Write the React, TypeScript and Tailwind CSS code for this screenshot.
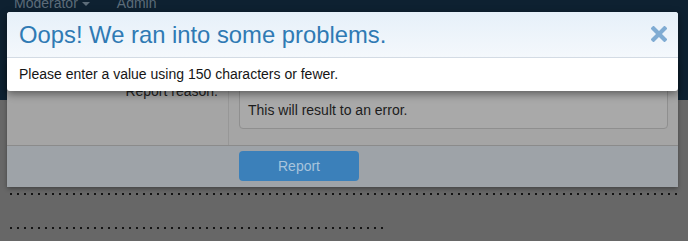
export default function App() {
  return (
    <div className="relative h-[241px] w-[688px] overflow-hidden bg-[#676767] font-['Liberation_Sans',Arial,sans-serif]">
      {/* dimmed page header */}
      <div className="flex h-[100px] flex-col bg-[#0e2131]">
        <div className="-mt-[7px] flex items-center gap-[27px] pl-[14px] text-[14px] text-[#5c6c79]">
          <span className="flex items-center gap-[4px]">
            Moderator
            <span className="h-0 w-0 border-x-[4px] border-t-[4px] border-x-transparent border-t-[#5c6c79]" />
          </span>
          <span>Admin</span>
        </div>
      </div>

      {/* dimmed page content */}
      <div className="flex flex-col gap-[32px] pl-[10px] pt-[93px]">
        <div className="h-[2px] w-[668px] bg-[repeating-linear-gradient(90deg,#141414_0_2px,transparent_2px_7px)]" />
        <div className="h-[2px] w-[374px] bg-[repeating-linear-gradient(90deg,#141414_0_2px,transparent_2px_7px)]" />
      </div>

      {/* report overlay behind */}
      <div className="absolute left-[7px] top-[62px] w-[671px] rounded-b-[3px] bg-[#a5a5a5] shadow-[0_2px_4px_rgba(0,0,0,0.35)]">
        <div className="flex">
          <div className="w-[222px] border-r border-[#979797] pr-[10px] pt-[21px] text-right text-[14px] leading-[16px] text-[#222]">
            Report reason:
          </div>
          <div className="flex-1 pb-[16px] pl-[10px] pr-[10px] pt-[8px]">
            <div className="flex h-[59px] items-end rounded-[4px] border border-[#8f8f8f] bg-[#a9a9a9] pb-[9px] pl-[8px] text-[14px] leading-[18px] text-[#1c1c1c]">
              This will result to an error.
            </div>
          </div>
        </div>
        <div className="border-t border-[#8b8b8b] bg-[#9ea3a8] pb-[6px] pl-[232px] pt-[5px]">
          <div className="flex h-[30px] w-[120px] items-center justify-center rounded-[4px] bg-[#3b80ba] text-[14px] text-[#a8c4dc]">
            Report
          </div>
        </div>
      </div>

      {/* error modal */}
      <div className="absolute left-[7px] top-[12px] w-[671px] overflow-hidden rounded-[3px] bg-white shadow-[0_3px_8px_rgba(0,0,0,0.45)]">
        <div className="flex h-[46px] items-center justify-between border-b border-[#d3dbe4] bg-[linear-gradient(180deg,#e6f0f9,#f4f8fc)] pl-[12px] pr-[11px]">
          <span className="text-[23.8px] leading-[28px] text-[#2f7ab4]">Oops! We ran into some problems.</span>
          <svg width="16" height="16" viewBox="0 0 16 16" className="-mt-[2px]">
            <path d="M2.5 2.5 L13.5 13.5 M13.5 2.5 L2.5 13.5" stroke="#80acd3" strokeWidth="4.2" strokeLinecap="square" />
          </svg>
        </div>
        <div className="flex h-[33px] items-center pl-[12px] text-[14px] text-[#151515]">
          Please enter a value using 150 characters or fewer.
        </div>
      </div>
    </div>
  );
}
